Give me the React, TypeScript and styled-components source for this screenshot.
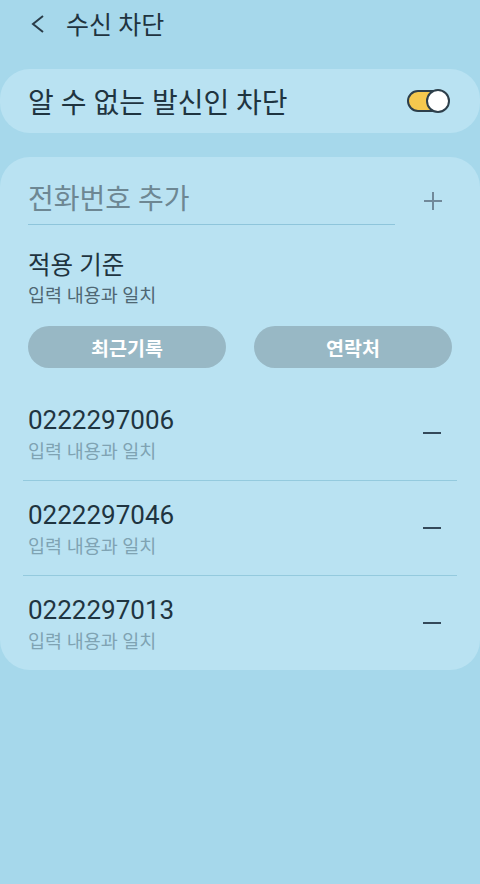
import styled, { createGlobalStyle } from 'styled-components';

const FONT = `Roboto, "Noto Sans CJK KR", "Noto Sans", sans-serif`;

const GlobalStyle = createGlobalStyle`
  html, body {
    margin: 0;
    padding: 0;
    background: #a6d8eb;
  }
  body {
    font-family: ${FONT};
    color: #1f3440;
  }
`;

const Page = styled.div`
  display: flex;
  flex-direction: column;
  min-height: 884px;
  background: #a6d8eb;
`;

const Header = styled.header`
  display: flex;
  align-items: center;
  height: 48px;
  padding-left: 30px;
  margin-bottom: 21px;
`;

const BackButton = styled.button`
  display: flex;
  align-items: center;
  justify-content: center;
  width: 16px;
  height: 24px;
  padding: 0;
  border: 0;
  background: none;
  margin-right: 20px;
`;

const Title = styled.h1`
  margin: 0;
  padding-top: 3px;
  font-size: 25px;
  font-weight: 400;
  line-height: 30px;
  color: #1f3440;
`;

const Card = styled.section`
  background: #b9e2f2;
  border-radius: 30px;
`;

const SwitchCard = styled(Card)`
  display: flex;
  align-items: center;
  justify-content: space-between;
  height: 64px;
  padding: 0 31px 0 28px;
  margin-bottom: 24px;
`;

const SwitchLabel = styled.span`
  font-size: 28px;
  line-height: 36px;
  padding-top: 5px;
  color: #1f3440;
`;

const Track = styled.div`
  display: flex;
  align-items: center;
  justify-content: flex-end;
  box-sizing: border-box;
  width: 42px;
  height: 22px;
  border-radius: 11px;
  border: 2px solid #2d3f4b;
  background: #f5c84e;
`;

const Thumb = styled.div`
  box-sizing: border-box;
  width: 24px;
  height: 24px;
  margin-right: -3px;
  border-radius: 50%;
  border: 2px solid #2d3f4b;
  background: #ffffff;
`;

const ListCard = styled(Card)`
  display: flex;
  flex-direction: column;
  padding-top: 25px;
`;

const AddRow = styled.div`
  display: flex;
  align-items: flex-start;
  padding: 0 28px;
`;

const Field = styled.div`
  flex: 1;
  padding-bottom: 6px;
  border-bottom: 1px solid #8ec5db;
  font-size: 28px;
  line-height: 36px;
  color: #6d8793;
`;

const PlusButton = styled.button`
  display: flex;
  align-items: center;
  justify-content: center;
  width: 38px;
  height: 38px;
  margin-left: 19px;
  padding: 0;
  border: 0;
  background: none;
`;

const Section = styled.div`
  display: flex;
  flex-direction: column;
  gap: 2px;
  padding: 0 28px;
  margin-top: 25px;
`;

const SectionTitle = styled.div`
  font-size: 24.5px;
  line-height: 32px;
  color: #1f3440;
`;

const Caption = styled.div<{ $muted?: boolean }>`
  font-size: 18.5px;
  line-height: 24px;
  color: ${(p) => (p.$muted ? '#7fa3b3' : '#4f6773')};
`;

const ButtonRow = styled.div`
  display: grid;
  grid-template-columns: 1fr 1fr;
  gap: 28px;
  padding: 0 28px;
  margin-top: 18px;
  margin-bottom: 18px;
`;

const PillButton = styled.button`
  height: 42px;
  border: 0;
  border-radius: 21px;
  background: #98b8c5;
  color: #ffffff;
  font-family: ${FONT};
  font-size: 19.5px;
  font-weight: 700;
`;

const Row = styled.div`
  display: flex;
  align-items: center;
  height: 94px;
  padding: 0 28px;
  box-sizing: border-box;
`;

const RowText = styled.div`
  flex: 1;
  display: flex;
  flex-direction: column;
  gap: 4px;
  margin-top: 1px;
`;

const Number = styled.div`
  font-size: 26px;
  line-height: 32px;
  color: #1f3440;
`;

const Minus = styled.span`
  display: block;
  width: 18px;
  height: 2px;
  margin-right: 11px;
  background: #34495a;
`;

const Divider = styled.div`
  height: 1px;
  margin: 0 23px;
  background: #94cade;
`;

const numbers = ['0222297006', '0222297046', '0222297013'];

export default function App() {
  return (
    <Page>
      <GlobalStyle />
      <Header>
        <BackButton aria-label="back">
          <svg width="14" height="20" viewBox="0 0 14 20">
            <polyline points="12,2 2,10 12,18" fill="none" stroke="#2a3c48" strokeWidth="2" />
          </svg>
        </BackButton>
        <Title>수신 차단</Title>
      </Header>

      <SwitchCard>
        <SwitchLabel>알 수 없는 발신인 차단</SwitchLabel>
        <Track>
          <Thumb />
        </Track>
      </SwitchCard>

      <ListCard>
        <AddRow>
          <Field>전화번호 추가</Field>
          <PlusButton aria-label="add">
            <svg width="20" height="20" viewBox="0 0 20 20">
              <path d="M10 1v18M1 10h18" stroke="#71899a" strokeWidth="2" />
            </svg>
          </PlusButton>
        </AddRow>

        <Section>
          <SectionTitle>적용 기준</SectionTitle>
          <Caption>입력 내용과 일치</Caption>
        </Section>

        <ButtonRow>
          <PillButton>최근기록</PillButton>
          <PillButton>연락처</PillButton>
        </ButtonRow>

        {numbers.map((n, i) => (
          <div key={n}>
            {i > 0 && <Divider />}
            <Row>
              <RowText>
                <Number>{n}</Number>
                <Caption $muted>입력 내용과 일치</Caption>
              </RowText>
              <Minus />
            </Row>
          </div>
        ))}
      </ListCard>
    </Page>
  );
}
